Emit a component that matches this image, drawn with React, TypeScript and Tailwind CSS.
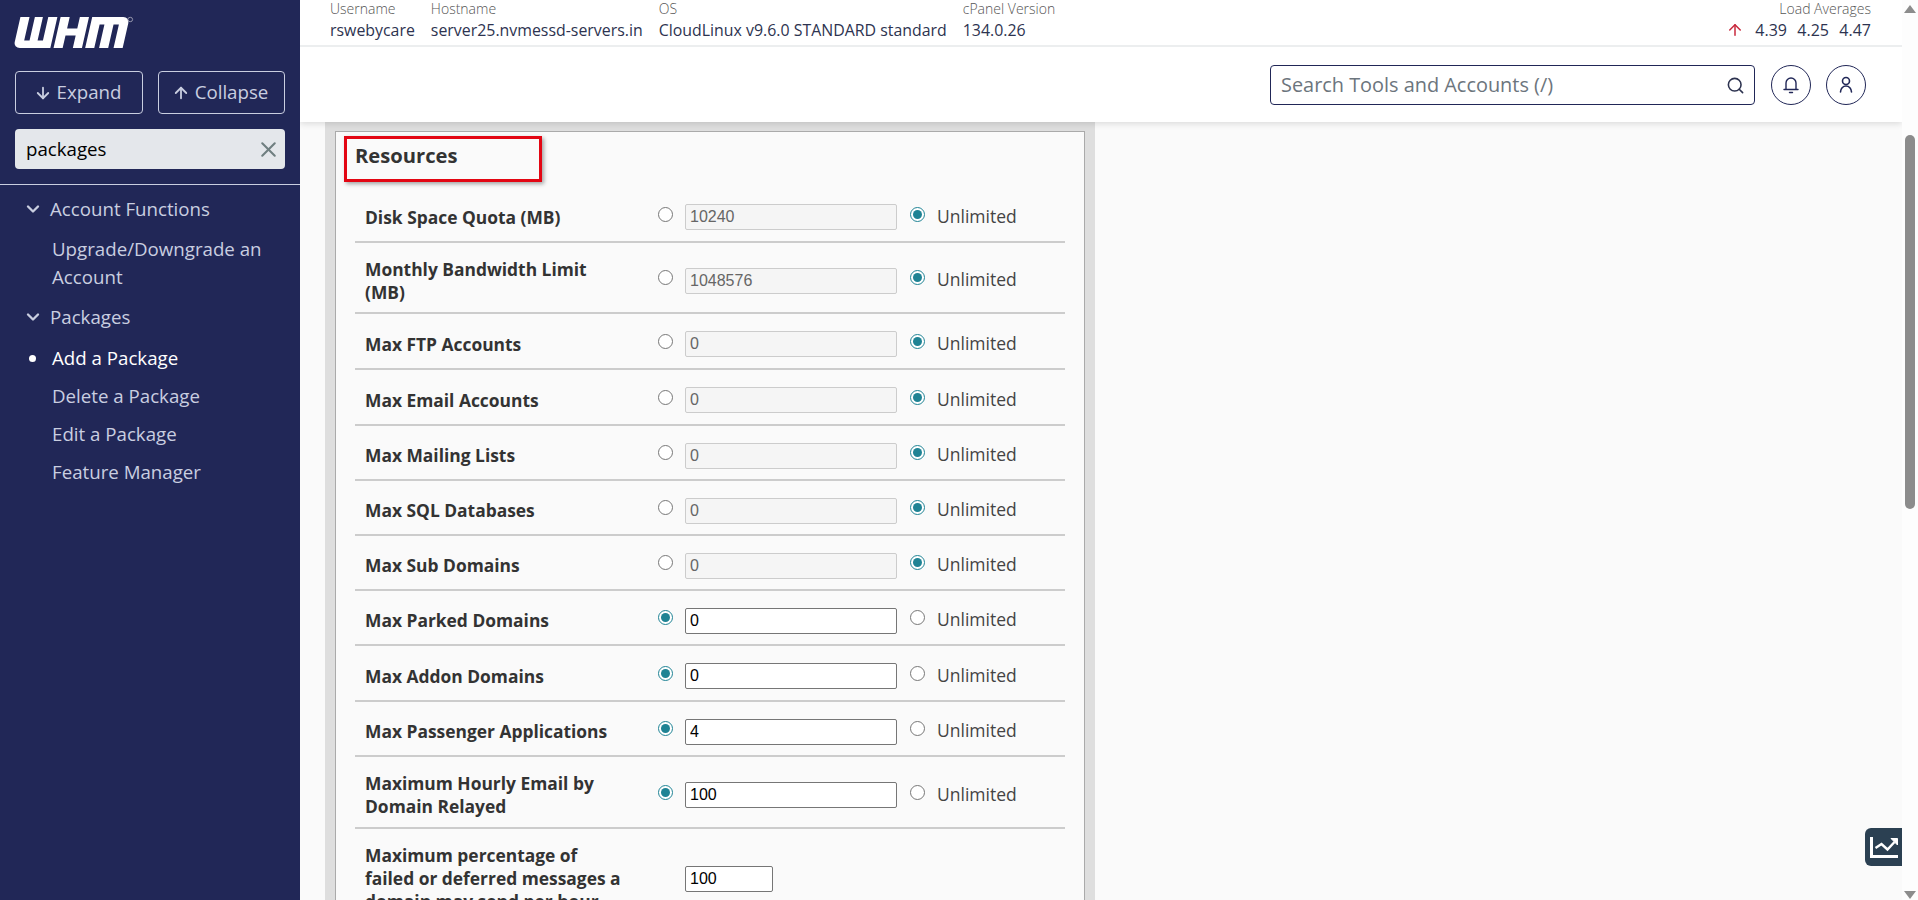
import { ArrowDown, ArrowUp, ChevronDown, Search, X } from "lucide-react";

const OPEN = "font-['Open_Sans',sans-serif]";

interface ResourceRow {
  label: string;
  value: string;
  height: string;
  unlimited: boolean;
}

const rows: ResourceRow[] = [
  { label: "Disk Space Quota (MB)", value: "10240", height: "h-[56px]", unlimited: true },
  { label: "Monthly Bandwidth Limit (MB)", value: "1048576", height: "h-[71px]", unlimited: true },
  { label: "Max FTP Accounts", value: "0", height: "h-[56px]", unlimited: true },
  { label: "Max Email Accounts", value: "0", height: "h-[56px]", unlimited: true },
  { label: "Max Mailing Lists", value: "0", height: "h-[55px]", unlimited: true },
  { label: "Max SQL Databases", value: "0", height: "h-[55px]", unlimited: true },
  { label: "Max Sub Domains", value: "0", height: "h-[55px]", unlimited: true },
  { label: "Max Parked Domains", value: "0", height: "h-[55px]", unlimited: false },
  { label: "Max Addon Domains", value: "0", height: "h-[56px]", unlimited: false },
  { label: "Max Passenger Applications", value: "4", height: "h-[55px]", unlimited: false },
  { label: "Maximum Hourly Email by Domain Relayed", value: "100", height: "h-[72px]", unlimited: false },
];

const stats = [
  { label: "Username", value: "rswebycare" },
  { label: "Hostname", value: "server25.nvmessd-servers.in" },
  { label: "OS", value: "CloudLinux v9.6.0 STANDARD standard" },
  { label: "cPanel Version", value: "134.0.26" },
];

// slanted logo, same proportions as the WHM mark
function Logo() {
  return (
    <svg width="120" height="33" viewBox="0 0 112 33" preserveAspectRatio="none" aria-label="WHM" className="block">
      <g fill="#fff" transform="translate(6 1) skewX(-12)">
        <path d="M0 0h8.500v23.500h5V0H21v23.500h5V0h8.500v31H6a6 6 0 0 1-6-6z" />
        <path d="M37.500 0H46v11.500h9.500V0H64v31h-8.500V18.500H46V31h-8.500z" />
        <path d="M67 0h29a6 6 0 0 1 6 6v25h-8.500V7.500h-5V31H80V7.500h-4.500V31H67z" />
      </g>
      <circle cx="108.500" cy="3.500" r="2.200" fill="none" stroke="#aab" strokeWidth="0.800" />
    </svg>
  );
}

function Sidebar() {
  return (
    <aside className={`w-[300px] shrink-0 bg-[#212757] text-[18.7px] text-[#c9cee0] ${OPEN}`}>
      <div className="h-[71px] pl-[14px] pt-[16px]">
        <Logo />
      </div>
      <div className="flex gap-[15px] px-[15px]">
        <button className="flex h-[43px] w-[128px] items-center justify-center gap-[5px] rounded border border-[#c9cee0] pr-[3px]">
          <ArrowDown size={18} strokeWidth={2.400} />
          Expand
        </button>
        <button className="flex h-[43px] w-[127px] items-center justify-center gap-[5px] rounded border border-[#c9cee0] pr-[3px]">
          <ArrowUp size={18} strokeWidth={2.400} />
          Collapse
        </button>
      </div>
      <div className="mx-[15px] mt-[15px] flex h-[40px] items-center justify-between rounded bg-[#e4e7eb] pl-[11px] pr-[4px] text-black">
        <span>packages</span>
        <X size={25} strokeWidth={2} className="text-[#6f7f80]" />
      </div>
      <div className="mt-[15px] border-t border-[#c9cee0]" />
      <nav className="pt-[10px]">
        <div className="flex h-[28px] items-center gap-[7px] pl-[23px]">
          <ChevronDown size={20} strokeWidth={2.800} />
          Account Functions
        </div>
        <div className="mt-[12px] pl-[52px] pr-[20px] leading-[28px]">Upgrade/Downgrade an Account</div>
        <div className="mt-[12px] flex h-[28px] items-center gap-[7px] pl-[23px]">
          <ChevronDown size={20} strokeWidth={2.800} />
          Packages
        </div>
        <div className="relative mt-[13px] h-[28px] pl-[52px] leading-[28px] text-white">
          <span className="absolute left-[29px] top-[11px] h-[7px] w-[7px] rounded-full bg-white" />
          Add a Package
        </div>
        <div className="mt-[10px] h-[28px] pl-[52px] leading-[28px]">Delete a Package</div>
        <div className="mt-[10px] h-[28px] pl-[52px] leading-[28px]">Edit a Package</div>
        <div className="mt-[10px] h-[28px] pl-[52px] leading-[28px]">Feature Manager</div>
      </nav>
    </aside>
  );
}

function Header() {
  return (
    <header className={`relative z-10 bg-white shadow-[0_2px_6px_rgba(0,0,0,0.12)] ${OPEN}`}>
      <div className="flex h-[47px] items-start justify-between border-b-2 border-[#eceeef] pl-[30px] pr-[31px] pt-[1px]">
        <div className="flex gap-[16px]">
          {stats.map((s) => (
            <div key={s.label}>
              <div className="text-[14px] font-light leading-[16px] text-[#555]">{s.label}</div>
              <div className="mt-[2px] text-[15.900px] leading-[22px] text-[#2d3350]">{s.value}</div>
            </div>
          ))}
        </div>
        <div className="text-right">
          <div className="text-[14px] font-light leading-[16px] text-[#555]">Load Averages</div>
          <div className="mt-[2px] flex h-[22px] items-center text-[16px] text-[#2d3350]">
            <ArrowUp size={18} className="mr-[11px] text-[#c8283c]" />
            <span className="w-[42px] text-left">4.39</span>
            <span className="w-[42px] text-left">4.25</span>
            <span>4.47</span>
          </div>
        </div>
      </div>
      <div className="flex h-[75px] items-center justify-end pr-[36px] pt-[1px]">
        <div className="flex h-[40px] w-[485px] items-center justify-between rounded border border-[#212757] pl-[10px] pr-[9px] text-[19.900px] text-[#6c757d]">
          Search Tools and Accounts (/)
          <Search size={19} className="text-[#2d3350]" />
        </div>
        <button className="ml-[16px] flex h-[40px] w-[40px] items-center justify-center rounded-full border border-[#212757]">
          <svg width="20" height="20" viewBox="0 0 20 20" fill="none" stroke="#212757" strokeWidth="1.400" strokeLinecap="round">
            <path d="M3 14.500h14M5 14.500V8a5 5 0 0 1 10 0v6.500M8.500 17.500h3" />
          </svg>
        </button>
        <button className="ml-[15px] flex h-[40px] w-[40px] items-center justify-center rounded-full border border-[#212757]">
          <svg width="20" height="20" viewBox="0 0 20 20" fill="none" stroke="#212757" strokeWidth="1.600" strokeLinecap="round">
            <circle cx="10" cy="6" r="3.500" />
            <path d="M4.500 17c0-3.500 2.500-6 5.500-6s5.500 2.500 5.500 6" />
          </svg>
        </button>
      </div>
    </header>
  );
}

function Row({ row }: { row: ResourceRow }) {
  const inputClass = row.unlimited
    ? "border-[#ccc] bg-[#f5f5f5] text-[#666]"
    : "border-[#767676] bg-white text-black";
  return (
    <div className={`flex items-center border-b-2 border-[#ccc] pl-[10px] pt-[6px] ${row.height}`}>
      <div className="w-[293px] pr-[40px] text-[17.400px] font-bold leading-[23px] text-[#333]">{row.label}</div>
      <input type="radio" readOnly checked={!row.unlimited} className="mb-[6px] mr-[12px] h-[15px] w-[15px] accent-[#1f8394]" />
      <input
        readOnly
        disabled={row.unlimited}
        value={row.value}
        className={`h-[26px] w-[212px] rounded-[2px] border pl-[4px] font-['Liberation_Sans',sans-serif] text-[16px] ${inputClass}`}
      />
      <input type="radio" readOnly checked={row.unlimited} className="mb-[6px] ml-[13px] mr-[12px] h-[15px] w-[15px] accent-[#1f8394]" />
      <span className="mb-[2px] text-[17.500px] text-[#444]">Unlimited</span>
    </div>
  );
}

function ResourcesPanel() {
  return (
    <div className={`ml-[25px] w-[770px] bg-[#dedede] px-[10px] pt-[9px] ${OPEN}`}>
      <div className="relative border border-[#aaa] bg-[#fafafa] px-[19px]">
        <span className="absolute left-[8px] top-[4px] h-[46px] w-[198px] border-[3px] border-[#e30613] shadow-[2px_2px_4px_rgba(0,0,0,0.35)]" />
        <h2 className="h-[55px] pt-[9px] text-[20.200px] font-bold leading-[28px] text-[#333]">Resources</h2>
        {rows.map((r) => (
          <Row key={r.label} row={r} />
        ))}
        <div className="flex items-center py-[15px] pl-[10px]">
          <div className="w-[320px] pr-[58px] text-[17.400px] font-bold leading-[23px] text-[#333]">
            Maximum percentage of failed or deferred messages a domain may send per hour
          </div>
          <input
            readOnly
            value="100"
            className="h-[26px] w-[88px] rounded-[2px] border border-[#767676] bg-white pl-[4px] font-['Liberation_Sans',sans-serif] text-[16px] text-black"
          />
        </div>
      </div>
    </div>
  );
}

export default function App() {
  return (
    <div className="flex h-[900px] overflow-hidden bg-[#fafafa]">
      <Sidebar />
      <main className="relative flex min-w-0 flex-1 flex-col overflow-hidden">
        <Header />
        <ResourcesPanel />
        <button className="absolute bottom-[34px] right-0 h-[38px] w-[37px] rounded-l-[6px] bg-[#2b4052]">
          <svg width="37" height="38" viewBox="0 0 37 38" fill="none" stroke="#fff" className="block">
            <path d="M6.500 9v19.500H33" strokeWidth="3" />
            <path d="M10.500 20l6-4 6 5.500 7-7.500" strokeWidth="2.400" />
            <path d="M26 10.500h6.500V17z" fill="#fff" strokeWidth="1" />
          </svg>
        </button>
      </main>
      <div className="flex w-[16px] shrink-0 flex-col items-center bg-[#fdfdfd]">
        <svg width="12" height="8" viewBox="0 0 12 8" className="mt-[5px]">
          <path d="M6 0l6 8H0z" fill="#8c8c8c" />
        </svg>
        <div className="mt-[122px] h-[374px] w-[10px] rounded-full bg-[#8c8c8c]" />
        <svg width="12" height="8" viewBox="0 0 12 8" className="mb-[1px] mt-auto">
          <path d="M6 8L12 0H0z" fill="#8c8c8c" />
        </svg>
      </div>
    </div>
  );
}
